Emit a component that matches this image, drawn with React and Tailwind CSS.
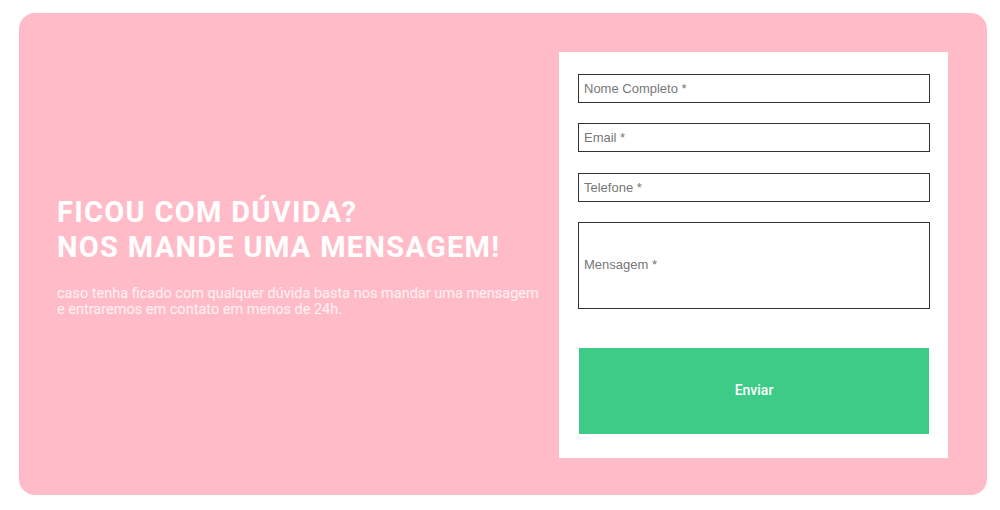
export default function App() {
  return (
    <div className="w-[1000px] h-[510px] bg-white pt-[13px] pl-[19px]">
      <div className="w-[968px] h-[482px] bg-[#ffbcc8] rounded-[16px] flex items-center pl-[38px] pr-[39px]">
        {/* Left text */}
        <div className="flex-1 pr-4 pt-[4px] font-['Roboto',sans-serif] text-white">
          <h2 className="text-[29px] leading-[35px] font-bold uppercase tracking-[1.3px]">
            Ficou com dúvida?
            <br />
            Nos mande uma mensagem!
          </h2>
          <p className="mt-[21px] text-[14.5px] leading-[16px] text-white/80">
            caso tenha ficado com qualquer dúvida basta nos mandar uma mensagem
            <br />
            e entraremos em contato em menos de 24h.
          </p>
        </div>

        {/* Form */}
        <form className="w-[389px] h-[406px] mt-[1px] bg-white flex flex-col pt-[22px] pl-[19px] pr-[18px] font-['Liberation_Sans',Arial,sans-serif]">
          <input
            placeholder="Nome Completo *"
            className="h-[29px] w-full border border-[#333] px-[5px] text-[13px] text-[#444] placeholder-[#777] outline-none"
          />
          <input
            placeholder="Email *"
            className="mt-[20px] h-[29px] w-full border border-[#333] px-[5px] text-[13px] text-[#444] placeholder-[#777] outline-none"
          />
          <input
            placeholder="Telefone *"
            className="mt-[21px] h-[29px] w-full border border-[#333] px-[5px] text-[13px] text-[#444] placeholder-[#777] outline-none"
          />
          <div className="mt-[20px] h-[87px] w-full border border-[#333] flex items-center px-[5px]">
            <input
              placeholder="Mensagem *"
              className="w-full text-[13px] text-[#444] placeholder-[#777] outline-none"
            />
          </div>
          <button
            type="button"
            className="mt-[39px] mx-px h-[86px] bg-[#3ecb87] text-white text-[14px] font-medium font-['Roboto',sans-serif]"
          >
            Enviar
          </button>
        </form>
      </div>
    </div>
  );
}
